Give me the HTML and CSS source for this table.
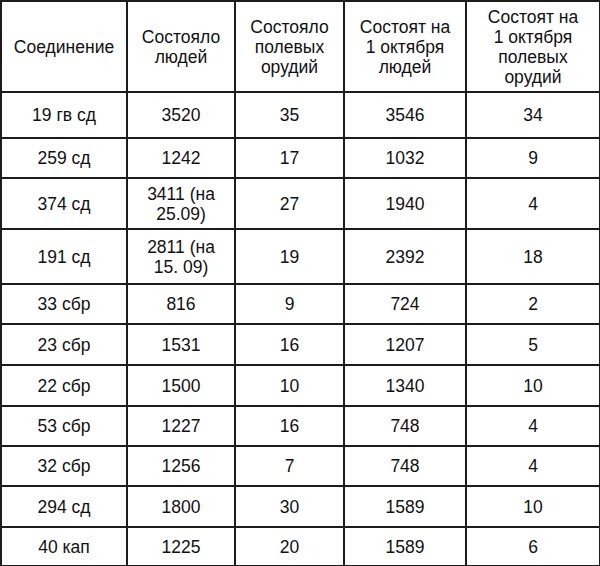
FILE: index.html
```html
<!DOCTYPE html>
<html lang="ru">
<head>
<meta charset="utf-8">
<link rel="stylesheet" href="styles.css">
</head>
<body>
<table class="grid">
  <colgroup>
    <col class="c1"><col class="c2"><col class="c3"><col class="c4"><col class="c5">
  </colgroup>
  <thead>
    <tr class="head">
      <th>Соединение</th>
      <th>Состояло<br>людей</th>
      <th>Состояло<br>полевых<br>орудий</th>
      <th>Состоят на<br>1 октября<br>людей</th>
      <th>Состоят на<br>1 октября<br>полевых<br>орудий</th>
    </tr>
  </thead>
  <tbody>
    <tr class="r46"><td>19 гв сд</td><td>3520</td><td>35</td><td>3546</td><td>34</td></tr>
    <tr class="r40"><td>259 сд</td><td>1242</td><td>17</td><td>1032</td><td>9</td></tr>
    <tr class="r51"><td>374 сд</td><td>3411 (на<br>25.09)</td><td>27</td><td>1940</td><td>4</td></tr>
    <tr class="r55"><td>191 сд</td><td>2811 (на<br>15. 09)</td><td>19</td><td>2392</td><td>18</td></tr>
    <tr class="r40"><td>33 сбр</td><td>816</td><td>9</td><td>724</td><td>2</td></tr>
    <tr class="r41"><td>23 сбр</td><td>1531</td><td>16</td><td>1207</td><td>5</td></tr>
    <tr class="r41"><td>22 сбр</td><td>1500</td><td>10</td><td>1340</td><td>10</td></tr>
    <tr class="r40"><td>53 сбр</td><td>1227</td><td>16</td><td>748</td><td>4</td></tr>
    <tr class="r40"><td>32 сбр</td><td>1256</td><td>7</td><td>748</td><td>4</td></tr>
    <tr class="r41"><td>294 сд</td><td>1800</td><td>30</td><td>1589</td><td>10</td></tr>
    <tr class="r39"><td>40 кап</td><td>1225</td><td>20</td><td>1589</td><td>6</td></tr>
  </tbody>
</table>
</body>
</html>
```
FILE: styles.css
```css
html, body {
  margin: 0;
  padding: 0;
  background: #ffffff;
}
.grid {
  border-collapse: collapse;
  table-layout: fixed;
  width: 599px;
  font-family: "Liberation Sans", Arial, sans-serif;
  font-size: 17.5px;
  line-height: 20px;
  color: #111;
}
.c1 { width: 126px; }
.c2 { width: 108px; }
.c3 { width: 109px; }
.c4 { width: 122px; }
.c5 { width: 134px; }
.grid th, .grid td {
  border: 2px solid #1c1c1c;
  padding: 0 2px;
  text-align: center;
  vertical-align: middle;
  font-weight: normal;
}
.head { height: 91px; }
.r39 { height: 39px; }
.r40 { height: 40px; }
.r41 { height: 41px; }
.r46 { height: 46px; }
.r51 { height: 51px; }
.r55 { height: 55px; }
```
